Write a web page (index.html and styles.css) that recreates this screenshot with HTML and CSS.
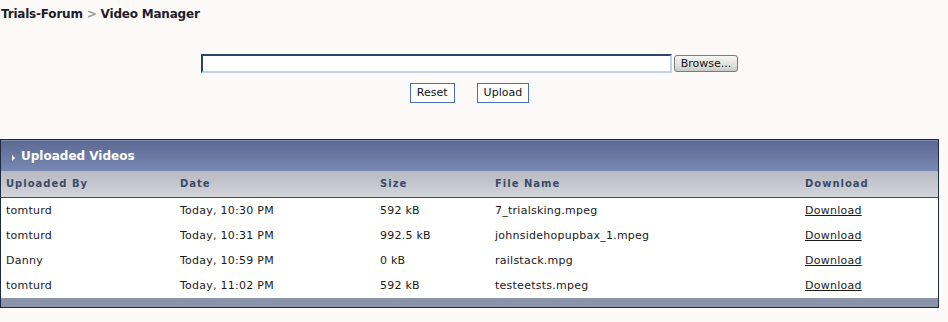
FILE: index.html
```html
<!DOCTYPE html>
<html>
<head>
<meta charset="utf-8">
<link rel="stylesheet" href="styles.css">
</head>
<body>
<div class="page">
  <div class="crumb"><span>Trials-Forum</span> <span class="sep">&gt;</span> <span>Video Manager</span></div>
  <form class="upload">
    <div class="filerow">
      <span class="filefield"></span>
      <span class="browse">Browse...</span>
    </div>
    <div class="btnrow">
      <span class="btn">Reset</span>
      <span class="btn">Upload</span>
    </div>
  </form>
  <div class="box">
    <div class="boxhead"><span class="arrow"></span>Uploaded Videos</div>
    <table class="grid">
      <colgroup>
        <col class="c1"><col class="c2"><col class="c3"><col class="c4"><col class="c5">
      </colgroup>
      <thead>
        <tr><th>Uploaded By</th><th>Date</th><th>Size</th><th>File Name</th><th>Download</th></tr>
      </thead>
      <tbody>
        <tr><td>tomturd</td><td>Today, 10:30 PM</td><td>592 kB</td><td>7_trialsking.mpeg</td><td><a href="#">Download</a></td></tr>
        <tr><td>tomturd</td><td>Today, 10:31 PM</td><td>992.5 kB</td><td>johnsidehopupbax_1.mpeg</td><td><a href="#">Download</a></td></tr>
        <tr><td>Danny</td><td>Today, 10:59 PM</td><td>0 kB</td><td>railstack.mpg</td><td><a href="#">Download</a></td></tr>
        <tr><td>tomturd</td><td>Today, 11:02 PM</td><td>592 kB</td><td>testeetsts.mpeg</td><td><a href="#">Download</a></td></tr>
      </tbody>
    </table>
    <div class="boxfoot"></div>
  </div>
</div>
</body>
</html>
```

FILE: styles.css
```css
html, body {
  margin: 0;
  padding: 0;
  background: #fbfaf8;
}
body {
  font-family: "DejaVu Sans", Verdana, sans-serif;
  font-size: 11px;
  color: #1a1a1a;
}
.page {
  width: 939px;
}
.crumb {
  padding: 7px 0 0 1px;
  height: 16px;
  font-size: 12px;
  font-weight: bold;
  color: #1c1c2c;
  letter-spacing: -0.2px;
}
.crumb .sep {
  color: #9a9a9a;
}
.upload {
  margin: 31px 0 0 0;
  display: flex;
  flex-direction: column;
  align-items: center;
}
.filerow {
  display: flex;
  align-items: center;
  gap: 2px;
  height: 19px;
}
.filefield {
  box-sizing: border-box;
  width: 471px;
  height: 19px;
  background: #fff;
  border-top: 2px solid #2c4466;
  border-left: 2px solid #2c4466;
  border-bottom: 2px solid #c4d2e6;
  border-right: 2px solid #c4d2e6;
}
.browse {
  box-sizing: border-box;
  width: 64px;
  height: 17px;
  border: 1px solid #7a7a7a;
  border-radius: 3px;
  background: linear-gradient(#f6f6f4, #dcdcd8 70%, #c8c8c4);
  font-size: 11px;
  text-align: center;
  line-height: 15px;
  color: #111;
}
.btnrow {
  display: flex;
  gap: 22px;
  margin-top: 10px;
}
.btn {
  box-sizing: border-box;
  height: 20px;
  padding: 0 6px;
  border: 1px solid #4b6fb0;
  background: #fff;
  line-height: 18px;
  font-size: 11px;
  color: #111;
}
.box {
  margin-top: 36px;
  border: 1px solid #1e2a40;
  background: #fff;
}
.boxhead {
  height: 31px;
  box-sizing: border-box;
  border-top: 1px solid #7d8bb0;
  background: linear-gradient(#5d6a92, #7888b4);
  color: #fff;
  font-weight: bold;
  font-size: 12px;
  display: flex;
  align-items: center;
  padding-left: 11px;
  gap: 6px;
}
.arrow {
  width: 0;
  height: 0;
  border-top: 3px solid transparent;
  border-bottom: 3px solid transparent;
  border-left: 3px solid #fff;
  margin-top: 3px;
}
.grid {
  width: 100%;
  border-collapse: collapse;
  table-layout: fixed;
}
.c1 { width: 174px; }
.c2 { width: 200px; }
.c3 { width: 115px; }
.c4 { width: 310px; }
.grid th {
  height: 26px;
  box-sizing: border-box;
  padding: 0 0 0 5px;
  text-align: left;
  font-size: 10px;
  font-weight: bold;
  letter-spacing: 1px;
  color: #3c4a68;
  background: linear-gradient(#b6b9c0, #d3d5db);
  border-bottom: 1px solid #3e4d66;
}
.grid td {
  height: 25px;
  padding: 0 0 0 5px;
  white-space: nowrap;
  letter-spacing: 0.25px;
  color: #1a1a1a;
}
.grid a {
  color: #1a1a1a;
  text-decoration: underline;
}
.boxfoot {
  height: 9px;
  background: #8a95ab;
}
```
